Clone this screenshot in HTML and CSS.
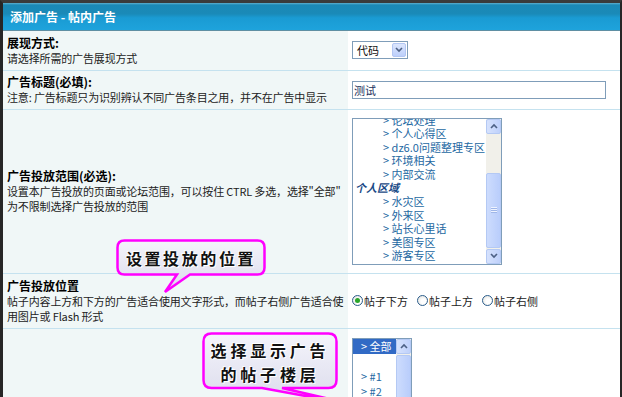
FILE: index.html
```html
<!DOCTYPE html>
<html lang="zh-CN">
<head>
    <meta charset="UTF-8">
    <title>添加广告 - 帖内广告</title>
    <link rel="stylesheet" href="styles.css">
</head>
<body>
    <div class="frame">
        <div class="title">添加广告 - 帖内广告</div>
        <table class="form">
            <tr class="row-short">
                <td class="label">
                    <b>展现方式:</b>
                    <div class="desc">请选择所需的广告展现方式</div>
                </td>
                <td class="field">
                    <div class="select">
                        <span class="select-value">代码</span>
                        <span class="select-btn">
                            <svg width="8" height="6" viewBox="0 0 8 6"><polyline points="1,1 4,4 7,1" fill="none" stroke="#4d6185" stroke-width="1.6"/></svg>
                        </span>
                    </div>
                </td>
            </tr>
            <tr class="row-short">
                <td class="label">
                    <b>广告标题(必填):</b>
                    <div class="desc">注意: 广告标题只为识别辨认不同广告条目之用，并不在广告中显示</div>
                </td>
                <td class="field">
                    <div class="text-input">测试</div>
                </td>
            </tr>
            <tr class="row-range">
                <td class="label">
                    <b>广告投放范围(必选):</b>
                    <div class="desc">设置本广告投放的页面或论坛范围，可以按住 CTRL 多选，选择"全部"<br>为不限制选择广告投放的范围</div>
                </td>
                <td class="field">
                    <div class="listbox forums">
                        <div class="list-view">
                            <div class="list-items">
                                <div class="opt">&gt; 论坛处理</div>
                                <div class="opt">&gt; 个人心得区</div>
                                <div class="opt">&gt; dz6.0问题整理专区</div>
                                <div class="opt">&gt; 环境相关</div>
                                <div class="opt">&gt; 内部交流</div>
                                <div class="group">个人区域</div>
                                <div class="opt">&gt; 水灾区</div>
                                <div class="opt">&gt; 外来区</div>
                                <div class="opt">&gt; 站长心里话</div>
                                <div class="opt">&gt; 美图专区</div>
                                <div class="opt">&gt; 游客专区</div>
                            </div>
                        </div>
                        <div class="scrollbar">
                            <div class="sb-btn">
                                <svg width="8" height="6" viewBox="0 0 8 6"><polyline points="1,5 4,2 7,5" fill="none" stroke="#4d6185" stroke-width="1.6"/></svg>
                            </div>
                            <div class="sb-track">
                                <div class="sb-gap"></div>
                                <div class="sb-thumb"><span class="grip"></span></div>
                            </div>
                            <div class="sb-btn">
                                <svg width="8" height="6" viewBox="0 0 8 6"><polyline points="1,1 4,4 7,1" fill="none" stroke="#4d6185" stroke-width="1.6"/></svg>
                            </div>
                        </div>
                    </div>
                </td>
            </tr>
            <tr class="row-position">
                <td class="label">
                    <b>广告投放位置</b>
                    <div class="desc">帖子内容上方和下方的广告适合使用文字形式，而帖子右侧广告适合使<br>用图片或 Flash 形式</div>
                </td>
                <td class="field">
                    <div class="radios">
                        <label class="radio-item"><span class="radio checked"></span>帖子下方</label>
                        <label class="radio-item"><span class="radio"></span>帖子上方</label>
                        <label class="radio-item"><span class="radio"></span>帖子右侧</label>
                    </div>
                </td>
            </tr>
            <tr class="row-floor">
                <td class="label"></td>
                <td class="field">
                    <div class="listbox floors">
                        <div class="list-view">
                            <div class="opt selected">&gt; 全部</div>
                            <div class="opt"></div>
                            <div class="opt">&gt; #1</div>
                            <div class="opt">&gt; #2</div>
                            <div class="opt">&gt; #3</div>
                        </div>
                        <div class="scrollbar">
                            <div class="sb-btn">
                                <svg width="8" height="6" viewBox="0 0 8 6"><polyline points="1,5 4,2 7,5" fill="none" stroke="#4d6185" stroke-width="1.6"/></svg>
                            </div>
                            <div class="sb-track">
                                <div class="sb-thumb"></div>
                            </div>
                        </div>
                    </div>
                </td>
            </tr>
        </table>
    </div>

    <!-- annotation bubbles drawn over the form -->
    <div class="callout callout-position">
        <svg class="bubble" width="152" height="56" viewBox="0 0 152 56">
            <defs>
                <linearGradient id="fillA" x1="0" y1="0" x2="0" y2="1">
                    <stop offset="0" stop-color="#f4f4fb"/>
                    <stop offset="1" stop-color="#dadaeb"/>
                </linearGradient>
            </defs>
            <path d="M8.5,1.5 H141.5 Q148.5,1.5 148.5,8.5 V28.5 Q148.5,35.5 141.5,35.5 H74 L49,53 L61,35.5 H8.5 Q1.5,35.5 1.5,28.5 V8.5 Q1.5,1.5 8.5,1.5 Z" fill="url(#fillA)" stroke="#ff00ff" stroke-width="2.5"/>
        </svg>
        <div class="callout-text">设置投放的位置</div>
    </div>

    <div class="callout callout-floor">
        <svg class="bubble" width="165" height="80" viewBox="0 0 165 80">
            <defs>
                <linearGradient id="fillB" x1="0" y1="0" x2="0" y2="1">
                    <stop offset="0" stop-color="#f4f4fb"/>
                    <stop offset="1" stop-color="#dadaeb"/>
                </linearGradient>
            </defs>
            <path d="M9.5,1.5 H126.5 Q134.5,1.5 134.5,9.5 V48 Q134.5,56 126.5,56 H80 L158,74 L60,56 H9.5 Q1.5,56 1.5,48 V9.5 Q1.5,1.5 9.5,1.5 Z" fill="url(#fillB)" stroke="#ff00ff" stroke-width="2.5"/>
        </svg>
        <div class="callout-text">选择显示广告<br>的帖子楼层</div>
    </div>
</body>
</html>
```

FILE: styles.css
```css
html, body {
    margin: 0;
    height: 397px;
    overflow: hidden;
}
body {
    position: relative;
    font-family: "Noto Sans CJK SC", "Liberation Sans", sans-serif;
    font-size: 11px;
    color: #222;
    background: #fff;
}
.frame {
    width: 622px;
    min-height: 397px;
    box-sizing: border-box;
    border-top: 3px solid #3a3a3a;
    border-left: 3px solid #262626;
    border-right: 2px solid #262626;
    background: #fff;
}
.title {
    height: 27px;
    line-height: 27px;
    padding-left: 7px;
    border-bottom: 1px solid #5f8fa3;
    background: linear-gradient(to bottom, #5fb0cf 0, #1b88b5 2px, #1a8ab8 40%, #1a9bd3 55%, #1ea3dc 100%);
    color: #fff;
    font-size: 12px;
    font-weight: bold;
}
.form {
    width: 100%;
    border-collapse: collapse;
}
.form td {
    box-sizing: border-box;
    padding: 0 4px;
    vertical-align: middle;
    border-bottom: 1px solid #c5e2ef;
}
.form td.label {
    width: 345px;
    background: #f0f7f7;
    white-space: nowrap;
}
.form td.field {
    background: #fff;
}
.label b {
    display: block;
    font-size: 12px;
    line-height: 16px;
    color: #000;
}
.desc {
    line-height: 15px;
    color: #222;
    letter-spacing: -0.15px;
}
.row-short td {
    height: 39px;
}
.row-range td {
    height: 164px;
}
.row-position td {
    height: 55px;
}
.row-floor td {
    height: 80px;
    vertical-align: top;
}

/* select box */
.select {
    display: flex;
    align-items: center;
    justify-content: space-between;
    width: 56px;
    height: 18px;
    box-sizing: border-box;
    border: 1px solid #7f9db9;
    padding: 0 1px 0 4px;
    background: #fff;
    color: #111;
}
.select-btn {
    display: flex;
    align-items: center;
    justify-content: center;
    width: 14px;
    height: 14px;
    box-sizing: border-box;
    border: 1px solid #b2c6f3;
    border-radius: 2px;
    background: linear-gradient(to bottom, #dce6fd, #bccffb);
}

/* text input */
.text-input {
    width: 254px;
    height: 18px;
    line-height: 16px;
    box-sizing: border-box;
    border: 1px solid #7f9db9;
    padding-left: 1px;
    color: #20305c;
}

/* list boxes */
.listbox {
    display: flex;
    box-sizing: border-box;
    border: 1px solid #7f9db9;
    background: #fff;
    color: #2468a2;
}
.listbox.forums {
    width: 150px;
    height: 147px;
}
.listbox.floors {
    width: 60px;
    height: 90px;
    margin-top: 9px;
}
.list-view {
    flex: 1;
    overflow: hidden;
}
.forums .list-items {
    margin-top: -5px;
}
.forums .opt {
    line-height: 13.6px;
    padding-left: 30px;
    white-space: nowrap;
}
.forums .group {
    line-height: 13.6px;
    padding-left: 2px;
    font-weight: bold;
    font-style: italic;
    color: #1a4a86;
}
.floors .opt {
    height: 15px;
    line-height: 15px;
    padding-left: 8px;
}
.floors .opt.selected {
    background: #316ac5;
    color: #fff;
}
.scrollbar {
    display: flex;
    flex-direction: column;
    width: 15px;
    background: #f1f0ea;
}
.sb-btn {
    display: flex;
    align-items: center;
    justify-content: center;
    height: 15px;
    box-sizing: border-box;
    border: 1px solid #b4c9f4;
    border-radius: 2px;
    background: linear-gradient(to right, #d6e2fd, #bfd1fb);
}
.sb-track {
    flex: 1;
    display: flex;
    flex-direction: column;
}
.sb-gap {
    height: 38px;
}
.sb-thumb {
    flex: 1;
    display: flex;
    align-items: center;
    justify-content: center;
    margin: 1px 0;
    border: 1px solid #b4c9f4;
    border-radius: 2px;
    background: linear-gradient(to right, #cddcfd, #b9cdfb);
}
.grip {
    width: 6px;
    height: 6px;
    background: repeating-linear-gradient(to bottom, #eef3ff 0, #eef3ff 1px, #9fb6e8 1px, #9fb6e8 2px);
}

/* radio buttons */
.radios {
    display: flex;
    align-items: center;
    gap: 9px;
    color: #222;
}
.radio-item {
    display: flex;
    align-items: center;
}
.radio {
    width: 11px;
    height: 11px;
    box-sizing: border-box;
    border: 1px solid #2b5d8c;
    border-radius: 50%;
    background: radial-gradient(circle at 60% 60%, #fff 30%, #dcdcd6 100%);
    margin-right: 1px;
    position: relative;
}
.radio.checked::after {
    content: "";
    position: absolute;
    left: 2px;
    top: 2px;
    width: 5px;
    height: 5px;
    border-radius: 50%;
    background: #2aa52a;
}

/* callouts */
.callout {
    position: absolute;
    display: flex;
    align-items: center;
    justify-content: center;
    text-align: center;
}
.bubble {
    position: absolute;
    left: 0;
    top: 0;
    overflow: visible;
}
.callout-text {
    position: relative;
    font-size: 16px;
    font-weight: bold;
    color: #111;
    text-shadow: 0 0 2px #fff, 1px 1px 0 #fff, -1px -1px 0 #fff;
}
.callout-position {
    left: 116px;
    top: 239px;
    width: 150px;
    height: 37px;
}
.callout-position .callout-text {
    letter-spacing: 2.6px;
    line-height: 20px;
}
.callout-floor {
    left: 202px;
    top: 332px;
    width: 136px;
    height: 57px;
}
.callout-floor .callout-text {
    letter-spacing: 3.8px;
    line-height: 24px;
    margin-top: 2px;
}
```
